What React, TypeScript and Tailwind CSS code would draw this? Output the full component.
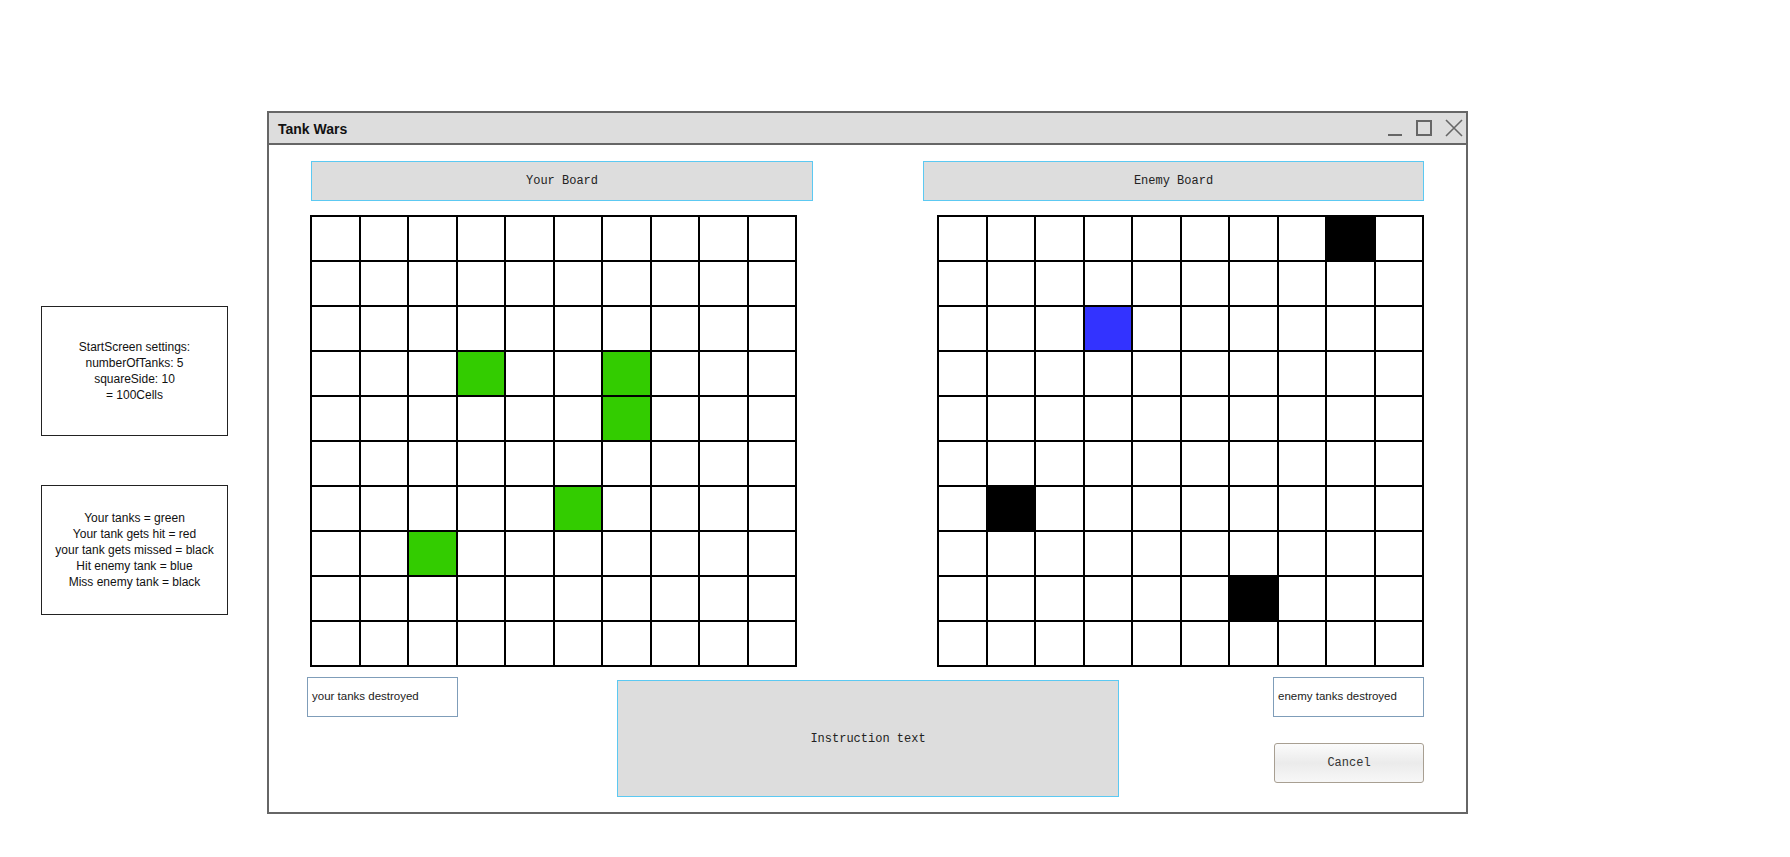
import React from 'react';

type Cell = '' | 'g' | 'b' | 'k';

// 10x10 boards, row-major
const YOUR_MARKS: Record<string, Cell> = {
  '3-3': 'g',
  '3-6': 'g',
  '4-6': 'g',
  '6-5': 'g',
  '7-2': 'g',
};

const ENEMY_MARKS: Record<string, Cell> = {
  '0-8': 'k',
  '2-3': 'b',
  '6-1': 'k',
  '8-6': 'k',
};

const cellColor = (c: Cell) => {
  switch (c) {
    case 'g':
      return 'bg-[#33cc00]';
    case 'b':
      return 'bg-[#3333ff]';
    case 'k':
      return 'bg-black';
    default:
      return 'bg-white';
  }
};

function Board({ marks }: { marks: Record<string, Cell> }) {
  const cells = [];
  for (let r = 0; r < 10; r++) {
    for (let c = 0; c < 10; c++) {
      const m = marks[`${r}-${c}`] || '';
      cells.push(<div key={`${r}-${c}`} className={cellColor(m)} />);
    }
  }
  return (
    <div className="grid h-[452px] w-[487px] grid-cols-10 grid-rows-10 gap-[2px] bg-black p-[2px]">
      {cells}
    </div>
  );
}

function Note({ lines }: { lines: string[] }) {
  return (
    <div className="flex h-[130px] w-[187px] flex-col items-center justify-center border border-[#222] bg-white text-center font-['Liberation_Sans',sans-serif] text-[12px] leading-[16px] text-[#111]">
      {lines.map((l) => (
        <div key={l}>{l}</div>
      ))}
    </div>
  );
}

function Header({ label, width }: { label: string; width: string }) {
  return (
    <div
      className={`flex h-[40px] items-center justify-center border border-[#5cc9f2] bg-[#dddddd] font-['Liberation_Mono',monospace] text-[12px] text-[#222] ${width}`}
    >
      {label}
    </div>
  );
}

function StatBox({ label }: { label: string }) {
  return (
    <div className="flex h-[40px] w-[151px] items-center border border-[#7f9db9] bg-white pl-[4px] font-['Liberation_Sans',sans-serif] text-[11.5px] text-[#222]">
      {label}
    </div>
  );
}

export default function App() {
  return (
    <div className="flex h-[857px] w-[1790px] items-start overflow-hidden bg-white">
      {/* annotation notes */}
      <div className="ml-[41px] mt-[306px] flex flex-col gap-[49px]">
        <Note lines={['StartScreen settings:', 'numberOfTanks: 5', 'squareSide: 10', '= 100Cells']} />
        <Note
          lines={[
            'Your tanks = green',
            'Your tank gets hit = red',
            'your tank gets missed = black',
            'Hit enemy tank = blue',
            'Miss enemy tank = black',
          ]}
        />
      </div>

      {/* window */}
      <div className="ml-[39px] mt-[111px] flex h-[703px] w-[1201px] flex-col border-2 border-[#666666] bg-white">
        <div className="flex h-[32px] shrink-0 items-center justify-between border-b-2 border-[#666666] bg-[#dddddd] pl-[9px] pr-[2px]">
          <span className="mt-[2px] font-['Liberation_Sans',sans-serif] text-[14px] font-bold text-[#111]">Tank Wars</span>
          <div className="flex items-center gap-[11px]">
            <svg width="18" height="18" viewBox="0 0 18 18" className="mt-[2px]">
              <line x1="2" y1="15" x2="16" y2="15" stroke="#666" strokeWidth="2" />
            </svg>
            <svg width="18" height="18" viewBox="0 0 18 18">
              <rect x="2" y="2" width="14" height="14" fill="none" stroke="#666" strokeWidth="2" />
            </svg>
            <svg width="20" height="20" viewBox="0 0 20 20">
              <path d="M2 2 L18 18 M18 2 L2 18" stroke="#666" strokeWidth="1.6" />
            </svg>
          </div>
        </div>

        <div className="flex flex-1 flex-col">
          <div className="flex justify-between pl-[42px] pr-[42px] pt-[16px]">
            <Header label="Your Board" width="w-[502px]" />
            <Header label="Enemy Board" width="w-[501px]" />
          </div>

          <div className="mt-[14px] flex justify-between pl-[41px] pr-[42px]">
            <Board marks={YOUR_MARKS} />
            <Board marks={ENEMY_MARKS} />
          </div>

          <div className="mt-[10px] flex items-start pl-[38px] pr-[42px]">
            <StatBox label="your tanks destroyed" />
            <div className="ml-[159px] mt-[3px] flex h-[117px] w-[502px] items-center justify-center border border-[#5cc9f2] bg-[#dddddd] font-['Liberation_Mono',monospace] text-[12px] text-[#222]">
              Instruction text
            </div>
            <div className="ml-auto flex flex-col items-end">
              <StatBox label="enemy tanks destroyed" />
              <button className="mt-[26px] h-[40px] w-[150px] rounded-[3px] border border-[#a89f92] bg-linear-to-b from-[#fbfbfb] via-[#ebebeb] to-[#f7f7f7] font-['Liberation_Mono',monospace] text-[12px] text-[#333]">
                Cancel
              </button>
            </div>
          </div>
        </div>
      </div>
    </div>
  );
}
